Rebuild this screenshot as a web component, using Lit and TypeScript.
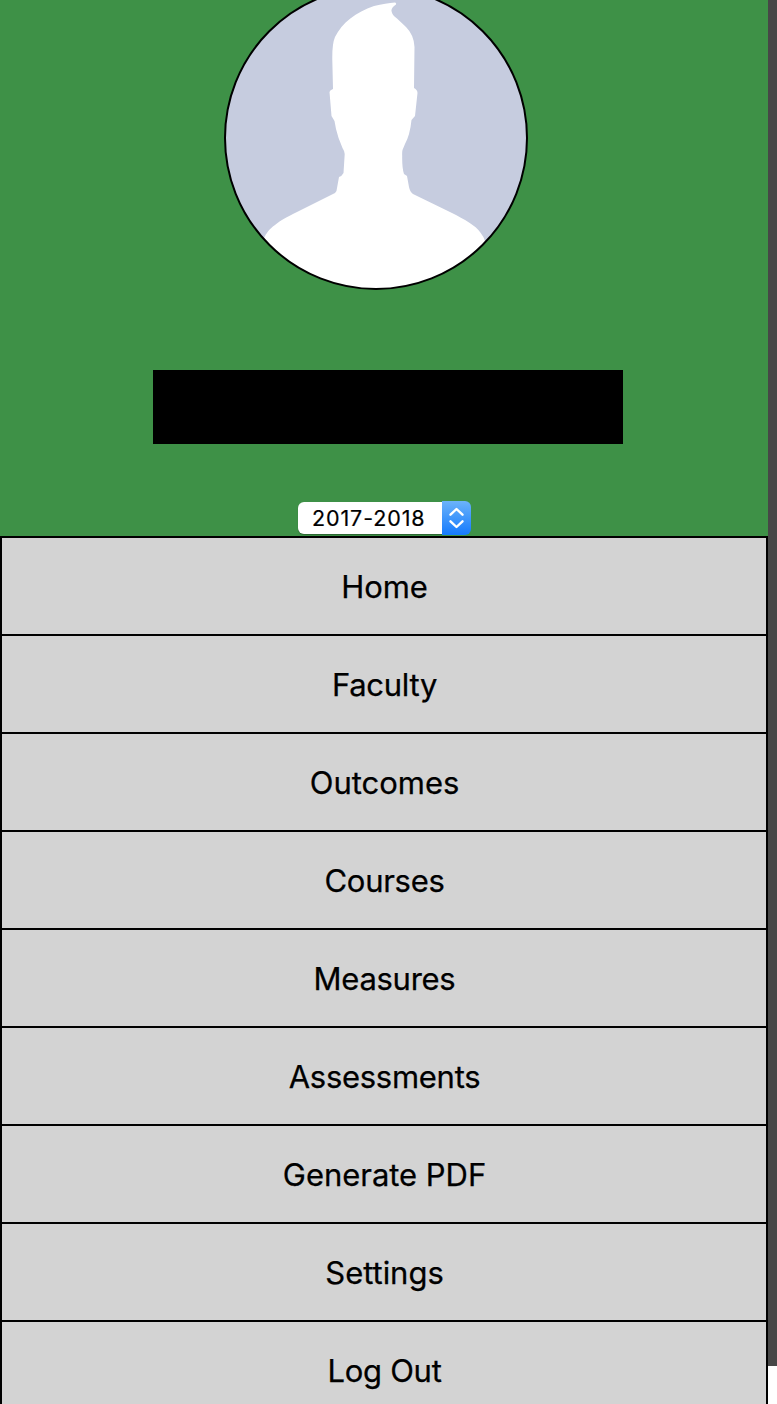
import { LitElement, html, css } from "lit";
import { customElement } from "lit/decorators.js";
import { classMap } from "lit/directives/class-map.js";

const ITEMS = ["Home", "Faculty", "Outcomes", "Courses", "Measures", "Assessments", "Generate PDF", "Settings", "Log Out"];
const LOOSE = new Set(["Home", "Outcomes", "Generate PDF", "Settings"]);

@customElement("app-root")
export class AppRoot extends LitElement {
  static styles = css`
    :host { display: flex; width: 777px; height: 1404px; overflow: hidden; background: #fff; color: #000; font-family: Inter, "Liberation Sans", sans-serif; }
    .panel { width: 768px; flex: none; display: flex; flex-direction: column; }
    .profile { height: 536px; flex: none; background: #3e9147; display: flex; flex-direction: column; align-items: flex-start; }
    .avatar { display: block; flex: none; margin: 0 0 0 224px; }
    .name { margin: 80px 0 0 153px; width: 470px; height: 74px; flex: none; background: #000; }
    .year { margin: 57px 0 0 298px; width: 173px; height: 35px; flex: none; display: flex; align-items: flex-start; border: 0; padding: 0; background: none; font: inherit; color: #000; }
    .value { width: 144px; height: 32px; margin-top: 1px; flex: none; font-size: 21.500px; line-height: 33px; letter-spacing: 0.9px; text-align: left; padding-left: 14px; box-sizing: border-box; white-space: nowrap; background: #fff; border-radius: 6px 0 0 6px; box-shadow: 0 1px 1px rgba(0, 0, 0, .3); -webkit-text-stroke: 0.2px #000; }
    .arrows { width: 29px; height: 34px; flex: none; background: linear-gradient(#6cb3fa, #147afd); border-radius: 0 6px 6px 0; }
    .arrows svg { display: block; }
    .menu { display: flex; flex-direction: column; flex: none; margin: 0; padding: 2px 2px 0; background: #000; gap: 2px; list-style: none; }
    .item { height: 96px; background: #d3d3d3; display: flex; align-items: center; justify-content: center; font-size: 31px; line-height: 38px; letter-spacing: -0.28px; font-variant-ligatures: none; padding: 1px 0 0 1px; box-sizing: border-box; -webkit-text-stroke: 0.25px #000; }
    .loose { letter-spacing: -0.03px; }
    .strip { width: 9px; height: 1366px; background: #474747; flex: none; }
  `;

  render() {
    return html`
      <div class="panel">
        <div class="profile">
          <svg class="avatar" width="304" height="290" viewBox="224 0 304 290">
            <defs><clipPath id="disc"><circle cx="376" cy="138" r="151" /></clipPath></defs>
            <circle cx="376" cy="138" r="151" fill="#c6ccdf" />
            <path clip-path="url(#disc)" fill="#fff" d="M264 238C266 234 269 229 275 225C281 220 287 217 297 212L335 193Q337 191 337 188L339 177Q342 176 343.500 173L344.700 154Q344.500 151 342.500 148Q338 138 336 129L334.500 121L331.500 116L329.500 92Q330 90 333 89L332.300 60Q332 44 335 37C342 23 356 12 374 6Q386 3 395 2.500Q396.500 3 396 4.500Q391 8 391.500 11Q392 15 397 18.500L406 27Q414 35 414.500 47L414 88Q417.500 90 417.500 93L415 116L411.500 120Q410 135 405 144L402.500 150Q402 152 402.200 156Q402 168 404 174L407 176L409 187Q410 192 413 194L452 213C464 219 476 226 480 232Q484 237 485 241V300H264Z" />
            <circle cx="376" cy="138" r="151" fill="none" stroke="#000" stroke-width="2" />
          </svg>
          <div class="name"></div>
          <button class="year">
            <span class="value">2017-2018</span>
            <span class="arrows"><svg width="29" height="34" viewBox="0 0 29 34" fill="none" stroke="#fff" stroke-width="2.400" stroke-linecap="round" stroke-linejoin="round"><path d="M8.500 13.700l6-5.700 6 5.700M8.500 20.300l6 5.700 6-5.700" /></svg></span>
          </button>
        </div>
        <ul class="menu">${ITEMS.map((t) => html`<li class=${classMap({ item: true, loose: LOOSE.has(t) })}><span>${t}</span></li>`)}</ul>
      </div>
      <div class="strip"></div>
    `;
  }
}
